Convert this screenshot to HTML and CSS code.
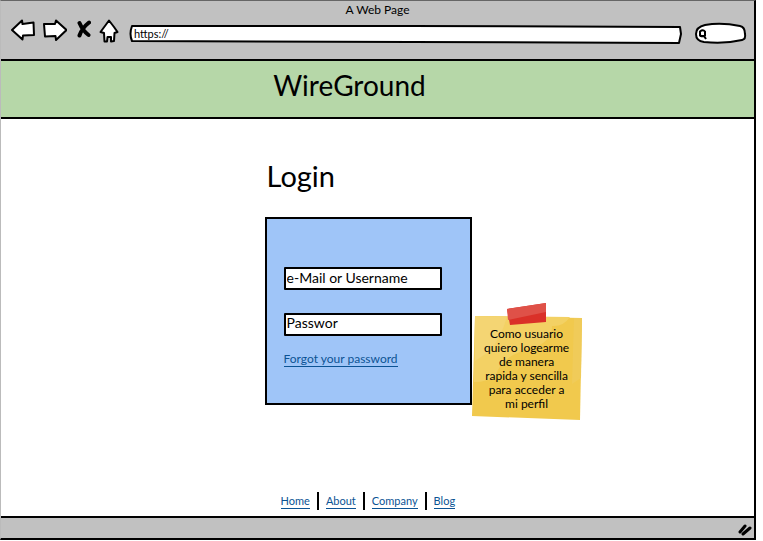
FILE: index.html
```html
<!DOCTYPE html>
<html lang="en">
<head>
<meta charset="utf-8">
<meta name="viewport" content="width=device-width, initial-scale=1">
<title>WireGround</title>
<link rel="stylesheet" href="styles.css">
</head>
<body>
<div class="window">
  <header class="chrome">
    <div class="window-title">A Web Page</div>
    <div class="toolbar">
      <button class="tool" type="button" aria-label="Back"><svg width="24" height="22" viewBox="0 0 24 22"><path class="line" d="M1 11 11 1.5 11.5 5 22.5 3.5 23 16 12 16.500 11.500 20.500Z"/></svg></button>
      <button class="tool" type="button" aria-label="Forward"><svg width="24" height="22" viewBox="0 0 24 22"><path class="line" d="M1 5 12 5 13 1.500 23.500 11 13 21 12.500 17 2 17.500Z"/></svg></button>
      <button class="tool tool-stop" type="button" aria-label="Stop"><svg width="14" height="18" viewBox="0 0 14 18"><path class="cross" d="M2.500 3Q6 11 11.500 15M12 2.500Q5 8 2.500 15.500"/></svg></button>
      <button class="tool" type="button" aria-label="Home page"><svg width="20" height="24" viewBox="0 0 20 24"><path class="line" d="M10 1.500 1.500 13 5 14 5.500 22.500 8 22.500 8.500 18 12 18 12 22.500 15 22 15.500 14 18.500 13 15 8Z"/></svg></button>
      <div class="address">
        <svg class="sketch" viewBox="0 0 550 19" preserveAspectRatio="none" aria-hidden="true"><path class="line" d="M2 1 280 1 549 2 550 9 548 18 280 17 2 16Q-1 9 2 1Z"/></svg>
        <input class="address-input" type="text" aria-label="Address" value="https://">
      </div>
      <div class="search">
        <svg class="sketch" viewBox="0 0 51 21" preserveAspectRatio="none" aria-hidden="true"><path class="line" d="M10 2Q26-1 45 3 50 4 50 11 51 16 47 17 30 21 9 19 1 18 1 11 1 4 10 2Z"/><path class="lens" d="M5 8.500Q8 6 10 8.500V12.500Q8 14 5 12.500ZM5 13H9L11 16"/></svg>
        <input class="search-input" type="search" aria-label="Search">
      </div>
    </div>
  </header>
  <div class="banner"><h1 class="brand">WireGround</h1></div>
  <main class="page">
    <h2 class="title">Login</h2>
    <div class="login-row">
      <form class="card">
        <input class="field" type="text" aria-label="e-Mail or Username" value="e-Mail or Username">
        <input class="field field-high" type="text" aria-label="Password" value="Passwor">
        <a class="link" href="#">Forgot your password</a>
      </form>
      <aside class="note">
        <svg class="note-paper" viewBox="0 0 110 117" preserveAspectRatio="none" aria-hidden="true">
          <path fill="#f1c94d" d="M3 13 110 15 108 117 0 113Z"/>
          <path fill="#f3d164" d="M3 13 98 14Q91 24 80 23 80 36 66 43 28 52 24 73 15 79 2 79Z"/>
          <path fill="#f4d573" d="M3 13 35 14Q29 34 18 48L3 58Z"/>
          <path fill="#f0cb59" d="M102 15 110 15 109 75 100 81Z"/>
          <path fill="#da3028" d="M35 6 74 0V19L38 22Z"/>
          <path fill="#df5148" d="M35 6 74 0V9L36 17Z"/>
        </svg>
        <p class="note-text">Como usuario<br>quiero logearme<br>de manera<br>rapida y sencilla<br>para acceder a<br>mi perfil</p>
      </aside>
    </div>
    <nav class="links" aria-label="Site">
      <a class="link" href="#">Home</a>
      <a class="link" href="#">About</a>
      <a class="link" href="#">Company</a>
      <a class="link" href="#">Blog</a>
    </nav>
  </main>
  <footer class="status"><svg width="14" height="12" viewBox="0 0 14 12" aria-hidden="true"><path class="grip" d="M2 8 7 2M5 10 12 4"/></svg></footer>
</div>
</body>
</html>
```
FILE: styles.css
```css
* { box-sizing: border-box; }
body {
  margin: 0;
  padding: 0 7px 1px 0;
  background: #fff;
  color: #000;
  font-family: Lato, "Open Sans", sans-serif;
  font-size: 12px;
}
h1, h2, p { margin: 0; font-weight: 400; }
input, button { font: inherit; color: inherit; }
.window {
  display: flex;
  flex-direction: column;
  min-height: calc(100vh - 1px);
  border: solid #000;
  border-width: 1px 2px 2px 1px;
  border-top-color: #666;
  border-left-color: #bbb;
}
.line { fill: #fff; stroke: #000; stroke-width: 2; stroke-linejoin: round; }
.cross { fill: none; stroke: #000; stroke-width: 4; stroke-linecap: round; }
.lens { fill: none; stroke: #000; stroke-width: 2; }
.grip { fill: none; stroke: #000; stroke-width: 3; stroke-linecap: round; }
.chrome { height: 58px; background: #c1c1c1; }
.window-title { line-height: 18px; text-align: center; }
.toolbar {
  display: flex;
  align-items: flex-start;
  gap: 8px;
  padding: 0 8px 0 10px;
}
.tool { display: flex; padding: 0; border: 0; background: none; }
.tool svg { display: block; }
.tool-stop { margin: 1px 0 0 2px; }
.address { position: relative; flex: 1; height: 19px; margin: 6px 6px 0 3px; }
.search { position: relative; width: 51px; height: 21px; margin-top: 4px; }
.sketch {
  position: absolute;
  inset: 0;
  width: 100%;
  height: 100%;
  overflow: visible;
}
.address-input, .search-input {
  position: relative;
  display: block;
  width: 100%;
  height: 100%;
  padding: 0 4px 2px;
  border: 0;
  background: none;
  font-size: 11px;
}
.search-input { padding-left: 15px; appearance: none; }
.banner {
  margin-right: -2px;
  padding-right: 56px;
  border: solid #000;
  border-width: 2px 2px 2px 0;
  background: #b6d7a8;
  text-align: center;
}
.brand { padding-bottom: 8px; font-size: 28px; line-height: 48px; }
.page {
  display: flex;
  flex: 1;
  flex-direction: column;
  align-items: flex-start;
  padding: 37px 0 7px 35%;
}
.title { padding-left: 2px; font-size: 29px; line-height: 40px; }
.login-row { display: flex; align-items: flex-end; margin-top: 21px; }
.card {
  display: flex;
  flex-direction: column;
  align-items: flex-start;
  width: 207px;
  height: 188px;
  padding: 48px 17px 0;
  border: 2px solid #000;
  background: #9fc5f8;
}
.field {
  width: 158px;
  height: 23px;
  margin-bottom: 23px;
  padding: 0 1px 2px;
  border: 2px solid #000;
  border-radius: 1px;
  background: #fff;
  font-size: 14px;
}
.field-high { padding-bottom: 4px; margin-bottom: 16px; }
.link {
  border-bottom: 1px solid #0b5394;
  color: #0b5394;
  line-height: 14px;
  text-decoration: none;
}
.note { position: relative; width: 110px; height: 117px; margin: 0 0 -15px; padding-top: 24px; }
.note-paper { position: absolute; inset: 0; width: 100%; height: 100%; }
.note-text { position: relative; line-height: 14px; text-align: center; }
.links { display: flex; align-items: center; margin: auto 0 0 16px; font-size: 11px; }
.links .link { position: relative; margin-right: 16px; }
.links .link + .link::before {
  content: "";
  position: absolute;
  top: -2px;
  left: -9px;
  width: 2px;
  height: 18px;
  background: #000;
}
.status {
  display: flex;
  align-items: center;
  justify-content: flex-end;
  height: 22px;
  padding: 4px 2px 0 0;
  border-top: 2px solid #000;
  background: #c1c1c1;
}
```
